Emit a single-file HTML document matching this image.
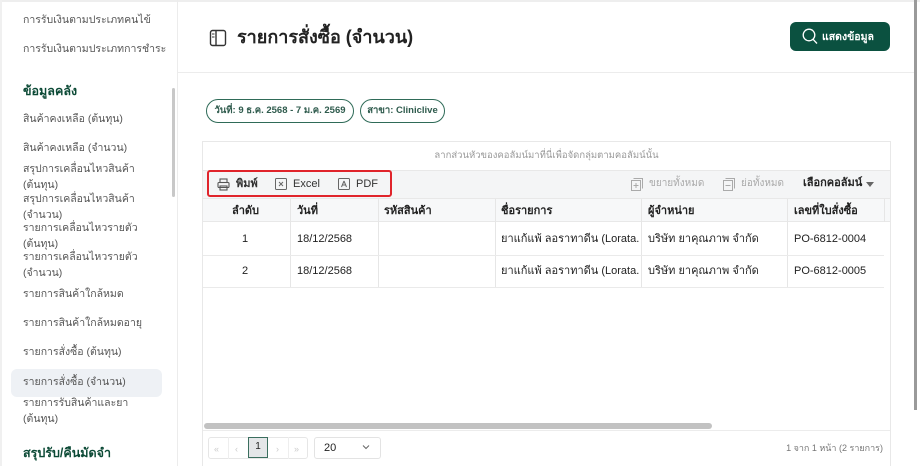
<!DOCTYPE html>
<html><head><meta charset="utf-8"><style>
*{box-sizing:border-box;margin:0;padding:0}
body{width:920px;height:466px;overflow:hidden;background:#fff;font-family:"Liberation Sans","Noto Sans CJK SC",sans-serif;position:relative;color:#222}
.a{position:absolute;white-space:nowrap;line-height:14px}
.si{font-size:10.5px;color:#555;left:23px;line-height:16px}
.sec{font-size:12.5px;font-weight:bold;color:#0c4a36;left:23px}
.th{font-size:11px;font-weight:bold;color:#222;top:204px}
.td{font-size:11px;color:#222}
.vl{position:absolute;width:1px;background:#e6e6e6}
</style></head><body>
<div class="a" style="left:0;top:0;width:920px;height:2px;background:#eee"></div>
<div class="a" style="left:177px;top:0;width:1px;height:466px;background:#ececec"></div>
<div class="a" style="left:0;top:0;width:2px;height:466px;background:#f0f0f0"></div>
<!-- sidebar -->
<div class="a si" style="top:12px">การรับเงินตามประเภทคนไข้</div>
<div class="a si" style="top:41px">การรับเงินตามประเภทการชำระ</div>
<div class="a sec" style="top:84px">ข้อมูลคลัง</div>
<div class="a si" style="top:111px">สินค้าคงเหลือ (ต้นทุน)</div>
<div class="a si" style="top:140px">สินค้าคงเหลือ (จำนวน)</div>
<div class="a si" style="top:161px">สรุปการเคลื่อนไหวสินค้า<br>(ต้นทุน)</div>
<div class="a si" style="top:191px">สรุปการเคลื่อนไหวสินค้า<br>(จำนวน)</div>
<div class="a si" style="top:220px">รายการเคลื่อนไหวรายตัว<br>(ต้นทุน)</div>
<div class="a si" style="top:249px">รายการเคลื่อนไหวรายตัว<br>(จำนวน)</div>
<div class="a si" style="top:286px">รายการสินค้าใกล้หมด</div>
<div class="a si" style="top:315px">รายการสินค้าใกล้หมดอายุ</div>
<div class="a si" style="top:344px">รายการสั่งซื้อ (ต้นทุน)</div>
<div class="a" style="left:11px;top:369px;width:151px;height:28px;background:#eef1f5;border-radius:6px"></div>
<div class="a si" style="top:374px">รายการสั่งซื้อ (จำนวน)</div>
<div class="a si" style="top:395px">รายการรับสินค้าและยา<br>(ต้นทุน)</div>
<div class="a sec" style="top:446px">สรุปรับ/คืนมัดจำ</div>
<div class="a" style="left:172px;top:88px;width:3px;height:109px;background:#c8c8c8;border-radius:2px"></div>
<!-- header -->
<div class="a" style="left:178px;top:72px;width:736px;height:1px;background:#ececec"></div>
<svg class="a" style="left:209px;top:29px" width="18" height="18" viewBox="0 0 18 18"><rect x="1.5" y="1.5" width="15" height="15" rx="2" fill="none" stroke="#333" stroke-width="1.4"/><line x1="7" y1="1.5" x2="7" y2="16.5" stroke="#333" stroke-width="1.4"/><line x1="3" y1="5" x2="5.5" y2="5" stroke="#333"/><line x1="3" y1="8" x2="5.5" y2="8" stroke="#333"/></svg>
<div class="a" style="left:237px;top:26px;font-size:18px;line-height:22px;font-weight:bold;color:#222">รายการสั่งซื้อ (จำนวน)</div>
<div class="a" style="left:790px;top:22px;width:100px;height:29px;background:#0b5140;border-radius:6px"></div>
<svg class="a" style="left:802px;top:28px" width="16" height="17" viewBox="0 0 16 17"><circle cx="7" cy="7" r="5.8" fill="none" stroke="#fff" stroke-width="1.3"/><line x1="11.2" y1="11.4" x2="15" y2="15.5" stroke="#fff" stroke-width="1.3"/></svg>
<div class="a" style="left:822px;top:30px;font-size:10.5px;font-weight:bold;color:#fff">แสดงข้อมูล</div>
<div class="a" style="left:914px;top:0;width:3px;height:410px;background:#9a9a9a"></div>
<!-- chips -->
<div class="a" style="left:206px;top:99px;width:148px;height:24px;border:1.3px solid #2f6b58;border-radius:12px;font-size:9.5px;font-weight:bold;color:#2f5b4d;text-align:center;line-height:21px">วันที่: 9 ธ.ค. 2568 - 7 ม.ค. 2569</div>
<div class="a" style="left:360px;top:99px;width:85px;height:24px;border:1.3px solid #2f6b58;border-radius:12px;font-size:9.5px;font-weight:bold;color:#2f5b4d;text-align:center;line-height:21px">สาขา: Cliniclive</div>
<!-- grid -->
<div class="a" style="left:202px;top:141px;width:689px;height:325px;border:1px solid #e8e8e8;border-bottom:none"></div>
<div class="a" style="left:202px;top:149px;width:689px;text-align:center;font-size:9.5px;color:#999">ลากส่วนหัวของคอลัมน์มาที่นี่เพื่อจัดกลุ่มตามคอลัมน์นั้น</div>
<div class="a" style="left:203px;top:170px;width:687px;height:29px;background:#f4f5f6;border-top:1px solid #e8e8e8;border-bottom:1px solid #e8e8e8"></div>
<div class="a" style="left:207px;top:170px;width:185px;height:27px;border:2px solid #e0242b;border-radius:3px"></div>
<svg class="a" style="left:217px;top:178px" width="13" height="13" viewBox="0 0 13 13" fill="none" stroke="#555" stroke-width="1.1"><rect x="3" y="1" width="7" height="3.5"/><rect x="1" y="4.5" width="11" height="5" rx="1"/><rect x="3" y="8" width="7" height="4"/></svg>
<div class="a" style="left:236px;top:177px;font-size:11px;font-weight:bold;color:#333">พิมพ์</div>
<svg class="a" style="left:275px;top:178px" width="12" height="12" viewBox="0 0 12 12" fill="none" stroke="#666"><rect x="0.5" y="0.5" width="11" height="11" rx="1"/><path d="M4 4l4 4M8 4l-4 4"/></svg>
<div class="a" style="left:293px;top:177px;font-size:11px;color:#333">Excel</div>
<svg class="a" style="left:338px;top:178px" width="12" height="12" viewBox="0 0 12 12" fill="none" stroke="#666"><rect x="0.5" y="0.5" width="11" height="11" rx="1"/><path d="M6 3l-2.5 6M6 3l2.5 6M4.5 7h3"/></svg>
<div class="a" style="left:356px;top:177px;font-size:11px;color:#333">PDF</div>
<svg class="a" style="left:631px;top:178px" width="12" height="13" viewBox="0 0 12 13" fill="none" stroke="#aaa"><rect x="0.5" y="2.5" width="9" height="10"/><path d="M2.5 0.5h9v10"/><path d="M5 5v5M2.5 7.5h5"/></svg>
<div class="a" style="left:649px;top:177px;font-size:10px;color:#aaa">ขยายทั้งหมด</div>
<svg class="a" style="left:723px;top:178px" width="12" height="13" viewBox="0 0 12 13" fill="none" stroke="#aaa"><rect x="0.5" y="2.5" width="9" height="10"/><path d="M2.5 0.5h9v10"/><path d="M2.5 7.5h5"/></svg>
<div class="a" style="left:741px;top:177px;font-size:10px;color:#aaa">ย่อทั้งหมด</div>
<div class="a" style="left:803px;top:176px;font-size:11px;font-weight:bold;color:#222">เลือกคอลัมน์</div>
<div class="a" style="left:866px;top:182px;width:0;height:0;border-left:4.5px solid transparent;border-right:4.5px solid transparent;border-top:5px solid #666"></div>
<div class="a" style="left:203px;top:199px;width:687px;height:23px;background:#f7f8f9;border-bottom:1px solid #e8e8e8"></div>
<div class="vl" style="left:290px;top:199px;height:88px"></div>
<div class="vl" style="left:378px;top:199px;height:88px"></div>
<div class="vl" style="left:495px;top:199px;height:88px"></div>
<div class="vl" style="left:641px;top:199px;height:88px"></div>
<div class="vl" style="left:787px;top:199px;height:88px"></div>
<div class="vl" style="left:884px;top:199px;height:23px"></div>
<div class="a th" style="left:232px">ลำดับ</div>
<div class="a th" style="left:297px">วันที่</div>
<div class="a th" style="left:384px">รหัสสินค้า</div>
<div class="a th" style="left:501px">ชื่อรายการ</div>
<div class="a th" style="left:648px">ผู้จำหน่าย</div>
<div class="a th" style="left:794px">เลขที่ใบสั่งซื้อ</div>
<div class="a" style="left:203px;top:255px;width:681px;height:1px;background:#eaeaea"></div>
<div class="a" style="left:203px;top:287px;width:681px;height:1px;background:#eaeaea"></div>
<div class="a td" style="left:242px;top:232px">1</div>
<div class="a td" style="left:297px;top:232px">18/12/2568</div>
<div class="a td" style="left:501px;top:232px;width:138px;overflow:hidden">ยาแก้แพ้ ลอราทาดีน (Lorata...</div>
<div class="a td" style="left:648px;top:232px">บริษัท ยาคุณภาพ จำกัด</div>
<div class="a td" style="left:794px;top:232px">PO-6812-0004</div>
<div class="a td" style="left:242px;top:264px">2</div>
<div class="a td" style="left:297px;top:264px">18/12/2568</div>
<div class="a td" style="left:501px;top:264px;width:138px;overflow:hidden">ยาแก้แพ้ ลอราทาดีน (Lorata...</div>
<div class="a td" style="left:648px;top:264px">บริษัท ยาคุณภาพ จำกัด</div>
<div class="a td" style="left:794px;top:264px">PO-6812-0005</div>
<div class="a" style="left:204px;top:423px;width:508px;height:6px;background:#c2c2c2;border-radius:3px"></div>
<div class="a" style="left:203px;top:430px;width:687px;height:1px;background:#ececec"></div>
<!-- pager -->
<div class="a" style="left:208px;top:437px;width:100px;height:22px;border:1px solid #e6e6e6;border-radius:3px"></div>
<div class="a" style="left:228px;top:437px;width:1px;height:22px;background:#eee"></div>
<div class="a" style="left:288px;top:437px;width:1px;height:22px;background:#eee"></div>
<div class="a" style="left:214px;top:442px;font-size:9px;color:#ccc">«</div>
<div class="a" style="left:235px;top:442px;font-size:9px;color:#ccc">‹</div>
<div class="a" style="left:248px;top:437px;width:20px;height:21px;border:1.3px solid #3b6e5e;background:#e4e6e8;font-size:10px;text-align:center;line-height:17px">1</div>
<div class="a" style="left:276px;top:442px;font-size:9px;color:#ccc">›</div>
<div class="a" style="left:294px;top:442px;font-size:9px;color:#ccc">»</div>
<div class="a" style="left:314px;top:437px;width:67px;height:22px;border:1px solid #e3e3e3;border-radius:3px"></div>
<div class="a" style="left:324px;top:441px;font-size:11px;color:#222">20</div>
<svg class="a" style="left:362px;top:444px" width="8" height="6" viewBox="0 0 8 6"><path d="M1 1.5l3 3 3-3" fill="none" stroke="#666"/></svg>
<div class="a" style="right:37px;top:441px;font-size:9px;color:#777">1 จาก 1 หน้า (2 รายการ)</div>
</body></html>
